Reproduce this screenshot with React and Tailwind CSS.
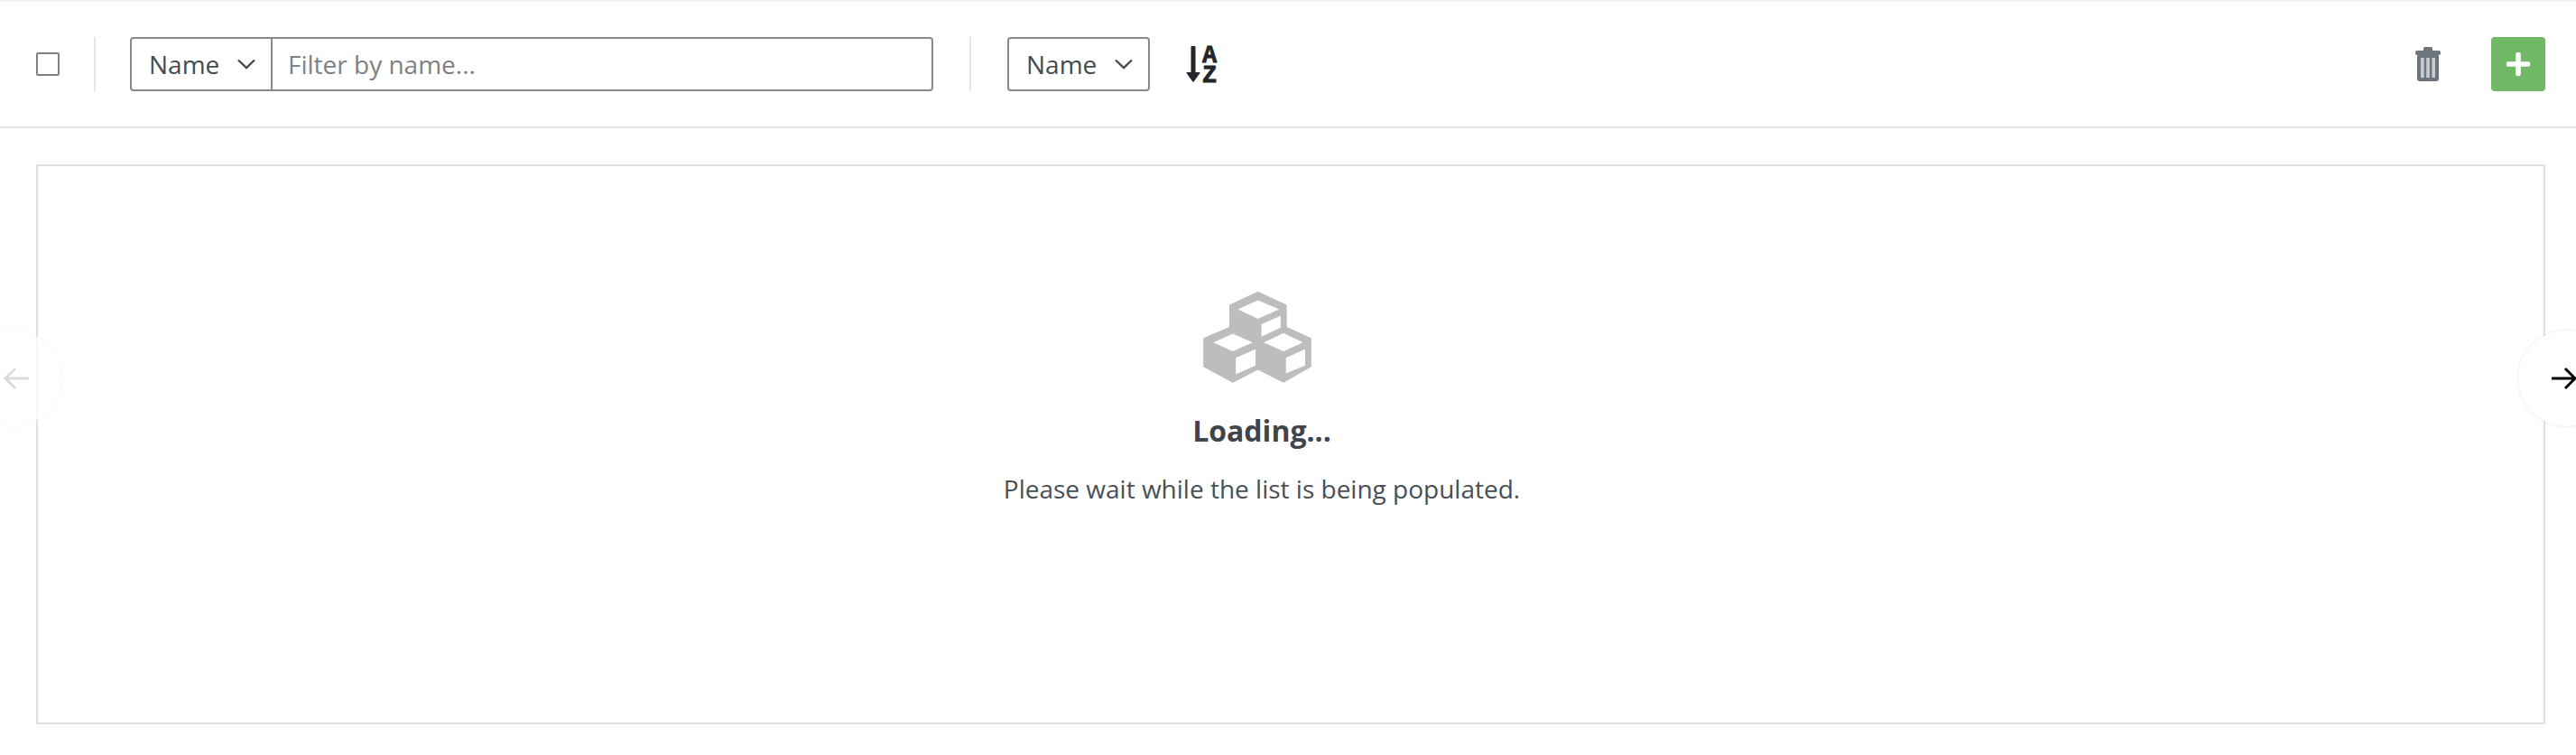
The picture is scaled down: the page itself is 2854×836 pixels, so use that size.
import { FaPlus } from 'react-icons/fa'

const font = { fontFamily: '"Open Sans", sans-serif' }

function Chevron() {
  return (
    <svg width="20" height="12" viewBox="0 0 20 12" fill="none" stroke="#444b52" strokeWidth="2.4" className="shrink-0">
      <path d="M1 1.5 L10 10 L19 1.5" />
    </svg>
  )
}

function TrashIcon() {
  return (
    <svg width="28" height="38" viewBox="0 0 28 38" className="shrink-0">
      <rect x="9" y="0" width="10" height="6" rx="2" fill="#6c757d" />
      <rect x="0" y="4" width="28" height="5" rx="2" fill="#6c757d" />
      <rect x="2" y="8" width="24" height="30" rx="3" fill="#6c757d" />
      <rect x="6" y="12" width="3.6" height="22" fill="#c9cccf" />
      <rect x="12.2" y="12" width="3.6" height="22" fill="#c9cccf" />
      <rect x="18.4" y="12" width="3.6" height="22" fill="#c9cccf" />
    </svg>
  )
}

function CubesIcon() {
  return (
    <svg width="122" height="103" viewBox="125 65 372 315" className="shrink-0 mr-[10px]">
      <path
        d="M313 72 L407 115 L407 190 L490 228 L490 320 L400 372 L313 328 L228 372 L132 320 L132 228 L220 190 L220 115 Z"
        fill="#bdbdbd"
        stroke="#bdbdbd"
        strokeWidth="8"
        strokeLinejoin="round"
      />
      <g fill="#fff">
        <path d="M245 128 L313 97 L385 128 L313 160 Z" />
        <path d="M325 178 L390 150 L390 190 L325 220 Z" />
        <path d="M162 240 L228 210 L295 240 L228 270 Z" />
        <path d="M238 292 L305 262 L305 318 L238 348 Z" />
        <path d="M333 240 L400 208 L465 240 L400 270 Z" />
        <path d="M408 292 L473 262 L473 318 L408 345 Z" />
      </g>
    </svg>
  )
}

function SortAzIcon() {
  return (
    <div className="flex items-start ml-[40px] h-[40px] text-[#212529]">
      <svg width="16" height="40" viewBox="0 0 16 40" fill="#212529" className="shrink-0">
        <path d="M5.5 1 Q5.5 0 6.5 0 H9.5 Q10.5 0 10.5 1 V29 H15 Q16 29 15.4 30 L8.6 39.5 Q8 40 7.4 39.5 L0.6 30 Q0 29 1 29 H5.5 Z" />
      </svg>
      <div
        style={{ fontFamily: '"Liberation Mono", monospace' }}
        className="flex flex-col items-center ml-[2px] font-bold text-[27px] leading-[20px] [-webkit-text-stroke:0.8px_#212529]"
      >
        <span className="mt-[1px]">A</span>
        <span className="mt-[2px]">Z</span>
      </div>
    </div>
  )
}

// ── Flechas del carrusel ──
function NavCircle({ side }) {
  const left = side === 'left'
  return (
    <div className={`absolute top-[364px] w-[106px] h-[106px] rounded-full flex items-center ${
      left
        ? 'left-[-38px] justify-end bg-white/70 shadow-[0_0_3px_rgba(0,0,0,0.06)]'
        : 'left-[2790px] justify-start bg-white shadow-[0_0_3px_rgba(0,0,0,0.12)]'
    }`}>
      {left ? (
        <svg width="30" height="26" viewBox="0 0 30 26" fill="none" stroke="#dcdcdc" strokeWidth="3" className="mr-[35px]">
          <path d="M29 13 H3 M14 2 L3 13 L14 24" />
        </svg>
      ) : (
        <svg width="30" height="26" viewBox="0 0 30 26" fill="none" stroke="#000" strokeWidth="3" className="ml-[36px]">
          <path d="M1 13 H27 M16 2 L27 13 L16 24" />
        </svg>
      )}
    </div>
  )
}

export default function App() {
  return (
    <div style={font} className="relative w-full h-[836px] overflow-hidden bg-white border-t-2 border-[#f0f0f0]">

      {/* Barra superior */}
      <div className="flex items-center h-[140px] pl-[40px] pr-[34px] border-b-2 border-[#e3e3e3]">
        <div className="w-[26px] h-[26px] border-2 border-[#7d8287] rounded-[2px] shrink-0" />
        <div className="w-[2px] h-[60px] bg-[#e6e6e6] ml-[38px] mr-[38px]" />

        <div className="flex h-[60px] w-[890px] border-2 border-[#85888d] rounded-[4px] text-[28px] text-[#444b52]">
          <div className="flex items-center w-[156px] pl-[19px] border-r-2 border-[#85888d] shrink-0">
            <span>Name</span>
            <span className="ml-[20px]"><Chevron /></span>
          </div>
          <div className="flex items-center pl-[17px] text-[#7d8186]">Filter by name...</div>
        </div>

        <div className="w-[2px] h-[60px] bg-[#e6e6e6] ml-[40px] mr-[40px]" />

        <div className="flex items-center h-[60px] w-[158px] pl-[19px] border-2 border-[#85888d] rounded-[4px] text-[28px] text-[#444b52]">
          <span>Name</span>
          <span className="ml-[20px]"><Chevron /></span>
        </div>

        <SortAzIcon />

        <div className="flex items-center ml-auto">
          <TrashIcon />
          <div className="flex items-center justify-center w-[60px] h-[60px] ml-[56px] rounded-[4px] bg-[#70b865]">
            <FaPlus className="w-[30px] h-[30px] text-white" />
          </div>
        </div>
      </div>

      {/* Panel central */}
      <div className="flex flex-col items-center h-[620px] mt-[40px] mx-[40px] w-[2780px] border-2 border-[#e0e0e0] pt-[138px] pr-[64px]">
        <CubesIcon />
        <div className="mt-[30px] text-[32px] leading-[44px] font-bold text-[#3f454b]">Loading...</div>
        <div className="mt-[22px] text-[28px] leading-[40px] text-[#494f55]">Please wait while the list is being populated.</div>
      </div>

      <NavCircle side="left" />
      <NavCircle side="right" />
    </div>
  )
}
